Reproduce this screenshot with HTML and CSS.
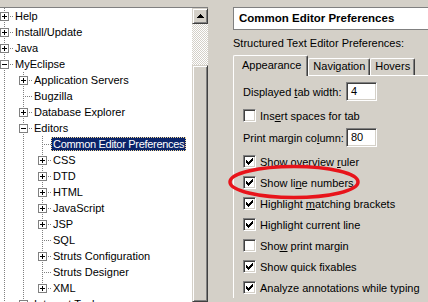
FILE: index.html
```html
<!DOCTYPE html>
<html lang="en">
<head>
  <meta charset="UTF-8">
  <meta name="viewport" content="width=device-width, initial-scale=1.0">
  <title>Preferences</title>
  <link rel="stylesheet" href="styles.css">
</head>
<body>
  <div class="window">
    <div class="tree-pane">
      <div class="tree">
        <div class="row"><span class="node"><i class="box plus"></i></span><span class="label">Help</span></div>
        <div class="row"><span class="node"><i class="box plus"></i></span><span class="label">Install/Update</span></div>
        <div class="row"><span class="node"><i class="box plus"></i></span><span class="label">Java</span></div>
        <div class="row"><span class="node"><i class="box"></i></span><span class="label">MyEclipse</span></div>
        <div class="row"><span class="ind pipe"></span><span class="node"><i class="box plus"></i></span><span class="label">Application Servers</span></div>
        <div class="row"><span class="ind pipe"></span><span class="node"></span><span class="label">Bugzilla</span></div>
        <div class="row"><span class="ind pipe"></span><span class="node"><i class="box plus"></i></span><span class="label">Database Explorer</span></div>
        <div class="row"><span class="ind pipe"></span><span class="node"><i class="box"></i></span><span class="label">Editors</span></div>
        <div class="row"><span class="ind pipe"></span><span class="ind pipe"></span><span class="node"></span><span class="label selected">Common Editor Preferences</span></div>
        <div class="row"><span class="ind pipe"></span><span class="ind pipe"></span><span class="node"><i class="box plus"></i></span><span class="label">CSS</span></div>
        <div class="row"><span class="ind pipe"></span><span class="ind pipe"></span><span class="node"><i class="box plus"></i></span><span class="label">DTD</span></div>
        <div class="row"><span class="ind pipe"></span><span class="ind pipe"></span><span class="node"><i class="box plus"></i></span><span class="label">HTML</span></div>
        <div class="row"><span class="ind pipe"></span><span class="ind pipe"></span><span class="node"><i class="box plus"></i></span><span class="label">JavaScript</span></div>
        <div class="row"><span class="ind pipe"></span><span class="ind pipe"></span><span class="node"><i class="box plus"></i></span><span class="label">JSP</span></div>
        <div class="row"><span class="ind pipe"></span><span class="ind pipe"></span><span class="node"></span><span class="label">SQL</span></div>
        <div class="row"><span class="ind pipe"></span><span class="ind pipe"></span><span class="node"><i class="box plus"></i></span><span class="label">Struts Configuration</span></div>
        <div class="row"><span class="ind pipe"></span><span class="ind pipe"></span><span class="node"></span><span class="label">Struts Designer</span></div>
        <div class="row"><span class="ind pipe"></span><span class="ind pipe"></span><span class="node last"><i class="box plus"></i></span><span class="label">XML</span></div>
        <div class="row"><span class="ind pipe"></span><span class="node"><i class="box plus"></i></span><span class="label">Internet Tools</span></div>
      </div>
      <div class="scrollbar">
        <div class="sb-button">
          <svg width="7" height="4" viewBox="0 0 7 4"><path d="M3 0h1v1h1v1h1v1h1v1H0V3h1V2h1V1h1z" fill="#000"/></svg>
        </div>
        <div class="sb-track"></div>
        <div class="sb-thumb"></div>
      </div>
    </div>

    <div class="prefs">
      <div class="title-box">Common Editor Preferences</div>
      <div class="subtitle">Structured Text Editor Preferences:</div>
      <div class="tabs">
        <div class="tab active">Appearance</div>
        <div class="tab">Navigation</div>
        <div class="tab">Hovers</div>
      </div>
      <div class="tab-body">
        <div class="field"><label>Displayed <u>t</u>ab width:</label><span class="textbox">4</span></div>
        <div class="check"><span class="cb"></span><span>Ins<u>e</u>rt spaces for tab</span></div>
        <div class="field"><label>Print margin co<u>l</u>umn:</label><span class="textbox">80</span></div>
        <div class="check"><span class="cb"><svg width="7" height="7" viewBox="0 0 7 7"><path d="M6 0h1v1H6zM5 1h2v1H5zM0 2h1v1H0zM4 2h3v1H4zM0 3h2v1H0zM3 3h3v1H3zM0 4h5v1H0zM1 5h3v1H1zM2 6h1v1H2z"/></svg></span><span>Show overview <u>r</u>uler</span></div>
        <div class="check"><span class="cb"><svg width="7" height="7" viewBox="0 0 7 7"><path d="M6 0h1v1H6zM5 1h2v1H5zM0 2h1v1H0zM4 2h3v1H4zM0 3h2v1H0zM3 3h3v1H3zM0 4h5v1H0zM1 5h3v1H1zM2 6h1v1H2z"/></svg></span><span>Show li<u>n</u>e numbers</span></div>
        <div class="check"><span class="cb"><svg width="7" height="7" viewBox="0 0 7 7"><path d="M6 0h1v1H6zM5 1h2v1H5zM0 2h1v1H0zM4 2h3v1H4zM0 3h2v1H0zM3 3h3v1H3zM0 4h5v1H0zM1 5h3v1H1zM2 6h1v1H2z"/></svg></span><span>Highlight <u>m</u>atching brackets</span></div>
        <div class="check"><span class="cb"><svg width="7" height="7" viewBox="0 0 7 7"><path d="M6 0h1v1H6zM5 1h2v1H5zM0 2h1v1H0zM4 2h3v1H4zM0 3h2v1H0zM3 3h3v1H3zM0 4h5v1H0zM1 5h3v1H1zM2 6h1v1H2z"/></svg></span><span>Hi<u>g</u>hlight current line</span></div>
        <div class="check"><span class="cb"></span><span>Sho<u>w</u> print margin</span></div>
        <div class="check"><span class="cb"><svg width="7" height="7" viewBox="0 0 7 7"><path d="M6 0h1v1H6zM5 1h2v1H5zM0 2h1v1H0zM4 2h3v1H4zM0 3h2v1H0zM3 3h3v1H3zM0 4h5v1H0zM1 5h3v1H1zM2 6h1v1H2z"/></svg></span><span>Show quick fixables</span></div>
        <div class="check"><span class="cb"><svg width="7" height="7" viewBox="0 0 7 7"><path d="M6 0h1v1H6zM5 1h2v1H5zM0 2h1v1H0zM4 2h3v1H4zM0 3h2v1H0zM3 3h3v1H3zM0 4h5v1H0zM1 5h3v1H1zM2 6h1v1H2z"/></svg></span><span>Analyze annotations while typing</span></div>
      </div>
    </div>

    <svg class="marker" width="140" height="38" viewBox="0 0 140 38">
      <ellipse cx="69" cy="19" rx="64" ry="15.5" fill="none" stroke="#e8141b" stroke-width="3.5"/>
    </svg>
  </div>
</body>
</html>
```

FILE: styles.css
```css
* {
  box-sizing: border-box;
}
body {
  margin: 0;
  width: 428px;
  height: 302px;
  overflow: hidden;
  background-color: #d4d0c8;
  font-family: "Liberation Sans", Arial, sans-serif;
  font-size: 11px;
  color: #000;
}
u {
  text-underline-offset: 1px;
}
.window {
  position: relative;
  display: flex;
  height: 302px;
  padding-top: 7px;
}

/* tree */
.tree-pane {
  display: flex;
  width: 208px;
  flex-shrink: 0;
  border-top: 1px solid #808080;
  overflow: hidden;
}
.tree {
  width: 192px;
  flex-shrink: 0;
  background-color: #fff;
  overflow: hidden;
}
.row {
  display: flex;
  height: 16px;
  white-space: nowrap;
}
.ind, .node {
  position: relative;
  flex-shrink: 0;
  height: 16px;
}
.ind {
  width: 19px;
}
.node {
  width: 13px;
}
.ind.pipe::before, .node::before {
  content: "";
  position: absolute;
  left: 4px;
  top: 0;
  width: 1px;
  height: 16px;
  background-image: linear-gradient(#808080 50%, transparent 50%);
  background-size: 1px 2px;
}
.node.last::before {
  height: 9px;
}
.node::after {
  content: "";
  position: absolute;
  left: 6px;
  top: 8px;
  width: 7px;
  height: 1px;
  background-image: linear-gradient(to right, #808080 50%, transparent 50%);
  background-size: 2px 1px;
}
.box {
  position: absolute;
  left: 0;
  top: 4px;
  width: 9px;
  height: 9px;
  border: 1px solid #808080;
  background-color: #fff;
  z-index: 1;
}
.box::before {
  content: "";
  position: absolute;
  left: 1px;
  top: 3px;
  width: 5px;
  height: 1px;
  background-color: #000;
}
.box.plus::after {
  content: "";
  position: absolute;
  left: 3px;
  top: 1px;
  width: 1px;
  height: 5px;
  background-color: #000;
}
.label {
  height: 14px;
  margin-top: 1px;
  padding: 0 2px;
  line-height: 14px;
}
.label.selected {
  background-color: #0a246a;
  color: #fff;
  letter-spacing: -0.3px;
  outline: 1px dotted #f5db95;
  outline-offset: -1px;
}

/* scrollbar */
.scrollbar {
  display: flex;
  flex-direction: column;
  width: 16px;
}
.sb-button, .sb-thumb {
  background-color: #d4d0c8;
  border: 1px solid;
  border-color: #d4d0c8 #404040 #404040 #d4d0c8;
  box-shadow: inset 1px 1px #fff, inset -1px -1px #808080;
}
.sb-button {
  display: flex;
  align-items: center;
  justify-content: center;
  height: 16px;
  padding-bottom: 1px;
}
.sb-track {
  height: 41px;
  background: repeating-conic-gradient(#fff 0 25%, #d4d0c8 0 50%) 0 0 / 2px 2px;
}
.sb-thumb {
  flex: 1;
}

/* preference page */
.prefs {
  flex: 1;
  padding-left: 25px;
  overflow: hidden;
}
.title-box {
  height: 23px;
  margin-right: -4px;
  padding-left: 5px;
  border: 1px solid #808080;
  background-color: #fff;
  font-size: 11.5px;
  font-weight: bold;
  line-height: 21px;
  white-space: nowrap;
}
.subtitle {
  margin-top: 7px;
  line-height: 13px;
  white-space: nowrap;
}
.tabs {
  display: flex;
  align-items: flex-end;
  height: 20px;
  margin-top: 5px;
}
.tab {
  height: 17px;
  padding: 0 4px;
  border-top: 1px solid #fff;
  border-left: 1px solid #fff;
  border-right: 1px solid #404040;
  border-radius: 2px 2px 0 0;
  box-shadow: inset -1px 0 #808080;
  line-height: 15px;
  white-space: nowrap;
}
.tab.active {
  position: relative;
  z-index: 1;
  height: 21px;
  margin-bottom: -1px;
  padding: 0 6px 0 8px;
  background-color: #d4d0c8;
  line-height: 19px;
}
.tab-body {
  border-top: 1px solid #fff;
  border-left: 1px solid #fff;
  padding: 6px 0 0 9px;
  white-space: nowrap;
}
.field {
  display: flex;
  align-items: center;
  height: 19px;
}
.field label {
  width: 103px;
}
.textbox, .cb {
  background-color: #fff;
  border: 1px solid;
  border-color: #808080 #fff #fff #808080;
  box-shadow: inset 1px 1px #404040, inset -1px -1px #d4d0c8;
}
.textbox {
  width: 31px;
  height: 19px;
  padding-left: 4px;
  line-height: 17px;
}
.check {
  display: flex;
  align-items: center;
  height: 21px;
}
.field + .check {
  margin-top: 4px;
}
.check + .field {
  margin-top: 2px;
}
.cb {
  display: flex;
  align-items: center;
  justify-content: center;
  width: 13px;
  height: 13px;
  margin-right: 4px;
}

/* red annotation */
.marker {
  position: absolute;
  left: 225px;
  top: 163px;
}
```
